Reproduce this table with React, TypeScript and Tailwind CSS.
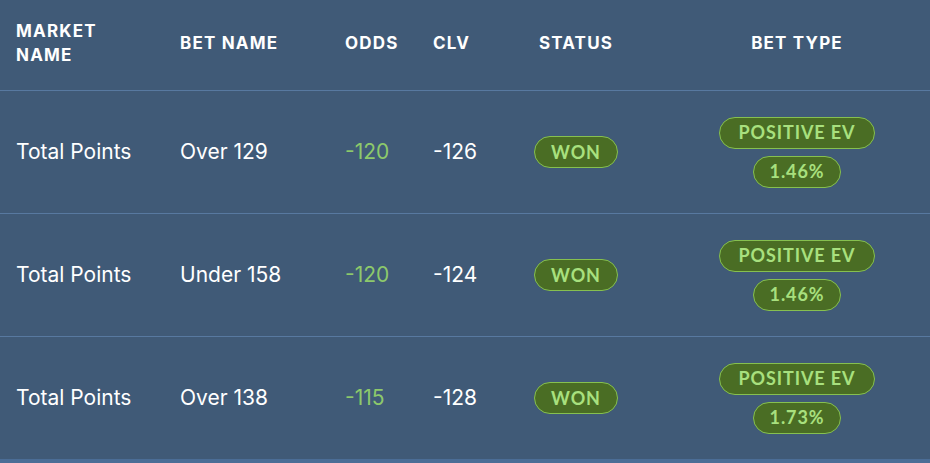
const rows = [
  { market: "Total Points", bet: "Over 129", odds: "-120", clv: "-126", status: "WON", ev: "1.46%" },
  { market: "Total Points", bet: "Under 158", odds: "-120", clv: "-124", status: "WON", ev: "1.46%" },
  { market: "Total Points", bet: "Over 138", odds: "-115", clv: "-128", status: "WON", ev: "1.73%" },
];

const cols = "grid grid-cols-[164px_165px_88px_55px_176px_1fr] pl-4";

function Pill({ children, className = "" }: { children: React.ReactNode; className?: string }) {
  return (
    <span
      className={`inline-flex h-[32px] items-center justify-center rounded-full border border-[#86c04f] bg-[#4a6d24] text-[18px] font-bold tracking-[0.05em] text-[#a8e07e] ${className}`}
      style={{ fontFamily: "Lato, 'Noto Sans', sans-serif" }}
    >
      {children}
    </span>
  );
}

export default function App() {
  return (
    <div
      className="h-[463px] w-[930px] overflow-hidden bg-[#405a77] text-white"
      style={{ fontFamily: "Inter, 'Noto Sans', sans-serif" }}
    >
      <div className={`${cols} h-[91px] items-center border-b border-[#5879a0] pb-[5px] text-[17px] font-bold leading-6 tracking-[0.07em]`}>
        <div>
          MARKET
          <br />
          NAME
        </div>
        <div>BET NAME</div>
        <div>ODDS</div>
        <div>CLV</div>
        <div className="text-center">STATUS</div>
        <div className="text-center">BET TYPE</div>
      </div>

      {rows.map((r, i) => (
        <div
          key={i}
          className={`${cols} items-center text-[21px] ${
            i === rows.length - 1 ? "h-[126px] border-b-4 border-[#4b6d96]" : "h-[123px] border-b border-[#5879a0]"
          }`}
        >
          <div>{r.market}</div>
          <div>{r.bet}</div>
          <div className="text-[#8dc96b]">{r.odds}</div>
          <div>{r.clv}</div>
          <div className="flex justify-center">
            <Pill className="w-[84px]">{r.status}</Pill>
          </div>
          <div className="flex flex-col items-center gap-[7px]">
            <Pill className="w-[156px]">POSITIVE EV</Pill>
            <Pill className="w-[88px]">{r.ev}</Pill>
          </div>
        </div>
      ))}
    </div>
  );
}
